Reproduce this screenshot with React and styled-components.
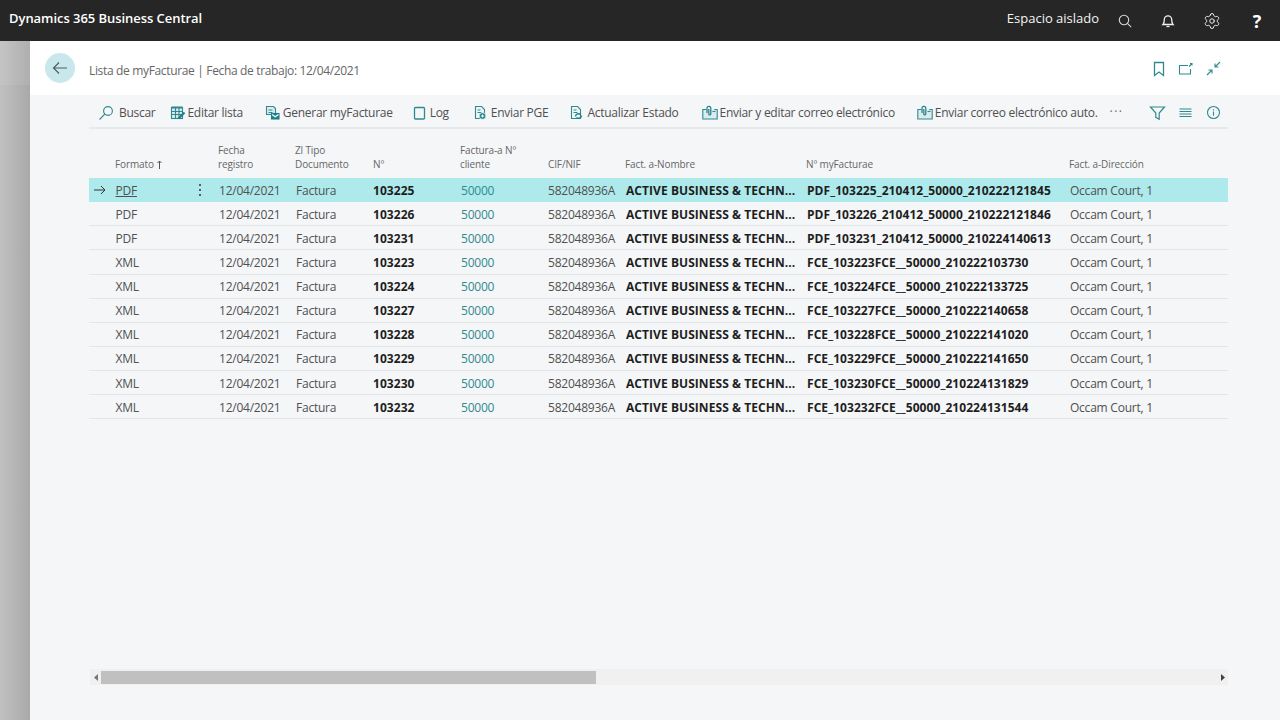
import React from "react";
import styled, { createGlobalStyle } from "styled-components";
import { Settings } from "lucide-react";

const Global = createGlobalStyle`
  html, body { margin: 0; padding: 0; height: 100%; overflow: hidden; background: #f5f6f8; }
  * { box-sizing: border-box; }
  #root { height: 720px; }
`;
const TEAL = "#2f8a90";
const FONT = `"Open Sans", "Noto Sans", "Liberation Sans", sans-serif`;

const Shell = styled.div`
  width: 1280px; height: 720px; display: flex; flex-direction: column;
  font-family: ${FONT}; color: #333; overflow: hidden;
`;
const TopBar = styled.header`
  height: 41px; flex: none; background: #262626; color: #fff;
  display: flex; align-items: center; padding: 0 15px 6px 9px;
`;
const Brand = styled.div`
  font-size: 13px; font-weight: 600; letter-spacing: -0.05px; white-space: nowrap; flex: 1;
`;
const Sandbox = styled.div`
  font-size: 13px; letter-spacing: -0.01px; margin-right: 19px; white-space: nowrap; color: #f4f4f4;
`;
const TopIcon = styled.span`
  display: flex; width: ${p => p.$w}px; justify-content: center; padding-top: 7px;
  margin-left: ${p => p.$ml ?? 0}px;
`;
const Help = styled(TopIcon)`
  font-size: 18px; font-weight: 700; color: #fff; line-height: 18px;
`;
const Body = styled.div`flex: 1; display: flex; min-height: 0;`;
const Side = styled.aside`
  width: 30px; flex: none;
  background:
    linear-gradient(180deg, rgba(255,255,255,.07) 0, rgba(255,255,255,.07) 44px, transparent 44px),
    linear-gradient(90deg, #c0c0c0 0%, #a9a9a9 100%);
`;
const Page = styled.main`flex: 1; display: flex; flex-direction: column; min-width: 0;`;
const Title = styled.section`
  height: 54px; flex: none; background: #fff; display: flex; align-items: center;
  padding: 0 59px 0 15px;
`;
const Back = styled.button`
  width: 30px; height: 30px; border-radius: 50%; border: 0; padding: 0; background: #c9e8ec;
  display: flex; align-items: center; justify-content: center; margin-top: -1px;
`;
const Crumb = styled.div`
  margin-left: 14px; flex: 1; font-size: 12px; color: #666; letter-spacing: -0.34px; white-space: nowrap; padding-top: 4px;
`;
const TitleIcons = styled.div`display: flex; gap: 13px; align-items: center; margin-top: 1px;`;
const Content = styled.section`
  flex: 1; display: flex; flex-direction: column; padding: 0 52px 0 59px; min-height: 0;
`;
const Toolbar = styled.nav`
  height: 34px; flex: none; display: flex; align-items: center;
  border-bottom: 2px solid #e8e9eb; padding: 4px 0 1px;
`;
const Action = styled.div`
  display: flex; align-items: center; gap: ${p => p.$gap}px; margin-left: ${p => p.$at}px;
  font-size: 12px; color: #505050; letter-spacing: -0.28px; white-space: nowrap;
  svg { flex: none; }
`;
const Dots = styled.span`
  margin-left: 12px; font-size: 12px; letter-spacing: 1.5px; color: #666; line-height: 1; margin-top: -2px;
`;
const ToolRight = styled.div`margin-left: 25px; display: flex; gap: 12.5px; align-items: center;`;

const COLS = "26px 103px 77px 78px 87px 88px 77px 181px 263px 1fr";
const Head = styled.div`
  height: 49px; flex: none; display: grid; grid-template-columns: ${COLS}; align-items: end; padding-bottom: 7px;
`;
const HeadCell = styled.div`
  font-size: 10px; line-height: 14px; color: #666; letter-spacing: -0.12px; white-space: pre-line;
  display: flex; align-items: center; gap: 3px;
`;
const Row = styled.div`
  height: 24.13px; display: grid; grid-template-columns: ${COLS}; align-items: center;
  background: ${p => (p.$active ? "#aeeaec" : "transparent")};
  border-bottom: ${p => (p.$active ? "0" : "1px solid #e4e5e7")};
  padding-top: ${p => (p.$active ? 0 : 1)}px;
  position: relative;
`;
const Cell = styled.div`
  font-size: 12px; white-space: nowrap; overflow: hidden;
  padding-left: ${p => p.$pad ?? 1}px;
  color: ${p => p.$link ? TEAL : p.$strong ? "#1e1e1e" : "#505050"};
  font-weight: ${p => (p.$strong ? 700 : 400)};
  text-decoration: ${p => (p.$under ? "underline" : "none")};
  letter-spacing: ${p => (p.$strong ? "0.06px" : "-0.23px")};
`;
const Marker = styled.div`display: flex; padding-left: 4px;`;
const Kebab = styled.span`
  position: absolute; left: 110px; top: 5px; width: 2px; height: 14px;
  display: flex; flex-direction: column; justify-content: space-between; padding: 1px 0;
  i { display: block; width: 2px; height: 2px; background: #333; border-radius: 50%; }
`;
const Spacer = styled.div`flex: 1;`;
const Scroll = styled.div`
  height: 16px; flex: none; margin: 0 0 35px 1px; background: #f0f0f0; display: flex; align-items: center;
`;
const ScrollEnd = styled.span`width: 11px; flex: none; display: flex; justify-content: center;`;
const Thumb = styled.div`width: 495px; height: 13px; background: #c0c0c0; flex: none;`;

const S = ({ w = 16, h = 16, vb, children, c = TEAL, sw = 1.1 }) => (
  <svg width={w} height={h} viewBox={vb || `0 0 ${w} ${h}`} fill="none" stroke={c} strokeWidth={sw}>{children}</svg>
);
const Doc = () => <path d="M3.500 1.500h6l3 3v9h-9z" fill="#eef6f7" />;
const Blob = ({ x = 10.5, y = 11, f = "#1f7f88" }) => <circle cx={x} cy={y} r="3.3" fill={f} stroke="#f5f6f8" strokeWidth=".7" />;

const Icons = {
  search: <S><circle cx="10" cy="6" r="4.4" /><path d="M6.800 9.200 1.500 14.500" /></S>,
  edit: <S><rect x="1.500" y="2.500" width="11" height="11" fill="#dcecee" /><path d="M1.500 2.500h11" strokeWidth="2" /><path d="M1.500 6.500h11M1.500 9.500h11M5.500 2.500v11M9 2.500v11" /><path d="M8.500 13.500l6-6" stroke="#1f7f88" strokeWidth="2.2" /></S>,
  gen: <S><path d="M2.500 1.500h7l2 2v6h-9z" fill="#dcecee" /><path d="M4.500 5h4M4.500 7.500h4" /><rect x="7.500" y="8.500" width="7.500" height="5.500" fill="#1f7f88" stroke="#1f7f88" /><path d="m8 9.500 3.200 2.300 3.300-2.300" stroke="#fff" /></S>,
  log: <S w={13} h={16} sw={1.3}><rect x="1.500" y="2.500" width="10" height="11.500" rx="1" /></S>,
  pge: <S><Doc /><path d="M5.500 5h3M5.500 7.500h4" /><Blob /><path d="M8.800 11h3.400M10.500 9.400v3.200" stroke="#fff" /></S>,
  act: <S><Doc /><path d="M5.500 5h3M5.500 7.500h4" /><path d="M7.500 11.500a3 3 0 0 1 5-2M13.500 10.500a3 3 0 0 1-5 2" strokeWidth="1.4" stroke="#1f7f88" /></S>,
  mail: <S><path d="M4.500 4.500H.8V14h14.400V4.500h-3" fill="#dcecee" /><path d="M5 8V3.200a1.900 1.900 0 0 1 3.800 0V9a1 1 0 0 1-2 0V4" stroke="#1f7f88" strokeWidth="1.2" /><path d="M10.500 6.500h3" /></S>,
  filter: <S w={17} h={16}><path d="M1.500 2h14l-5.300 6v6.300l-3.400-2V8z" strokeWidth="1.2" /></S>,
  list: <S w={15} h={16}><path d="M1.500 4h12M1.500 6.500h12M1.500 9h12M1.500 11.500h12" strokeWidth="1.2" /></S>,
  info: <S w={15} h={16}><circle cx="7.500" cy="7.500" r="6" /><path d="M7.500 6.500v4.200M7.500 4.200v1.200" /></S>,
};
const tools = [
  ["search", "Buscar", 9, 5],
  ["edit", "Editar lista", 15, 1],
  ["gen", "Generar myFacturae", 21, 3],
  ["log", "Log", 20, 4],
  ["pge", "Enviar PGE", 23, 3],
  ["act", "Actualizar Estado", 20, 3],
  ["mail", "Enviar y editar correo electrónico", 23, 2],
  ["mail", "Enviar correo electrónico auto.", 22, 2],
];
const heads = [
  [null], ["Formato", true], ["Fecha\nregistro"], ["Zl Tipo\nDocumento"], ["Nº"], ["Factura-a Nº\ncliente"],
  ["CIF/NIF"], ["Fact. a-Nombre"], ["Nº myFacturae"], ["Fact. a-Dirección"],
];
const rows = [
  ["PDF", "103225", "PDF_103225_210412_50000_210222121845"],
  ["PDF", "103226", "PDF_103226_210412_50000_210222121846"],
  ["PDF", "103231", "PDF_103231_210412_50000_210224140613"],
  ["XML", "103223", "FCE_103223FCE__50000_210222103730"],
  ["XML", "103224", "FCE_103224FCE__50000_210222133725"],
  ["XML", "103227", "FCE_103227FCE__50000_210222140658"],
  ["XML", "103228", "FCE_103228FCE__50000_210222141020"],
  ["XML", "103229", "FCE_103229FCE__50000_210222141650"],
  ["XML", "103230", "FCE_103230FCE__50000_210224131829"],
  ["XML", "103232", "FCE_103232FCE__50000_210224131544"],
];

export default function App() {
  return (
    <Shell>
      <Global />
      <TopBar>
        <Brand>Dynamics 365 Business Central</Brand>
        <Sandbox>Espacio aislado</Sandbox>
        <TopIcon $w={14}><S w={14} h={14} c="#d8d8d8"><circle cx="6" cy="6" r="4.7" /><path d="m9.400 9.400 3.800 3.800" /></S></TopIcon>
        <TopIcon $w={34} $ml={19}><S w={14} h={16} c="#f2f2f2" sw={1.3}><path d="M2 11.500c1.300-1.200 1.300-2.500 1.300-5a3.700 3.700 0 0 1 7.400 0c0 2.500 0 3.800 1.300 5z" /><path d="M5.500 13.500h3" /></S></TopIcon>
        <TopIcon $w={18} $ml={18}><Settings size={18} strokeWidth={1.3} color="#eeeeee" /></TopIcon>
        <Help $w={16} $ml={28}>?</Help>
      </TopBar>
      <Body>
        <Side />
        <Page>
          <Title>
            <Back aria-label="Atrás"><S w={16} h={14} c="#4a5c60"><path d="M15 7H1.500M7 1.500 1.500 7 7 12.500" /></S></Back>
            <Crumb>Lista de myFacturae | Fecha de trabajo: 12/04/2021</Crumb>
            <TitleIcons>
              <S w={12} h={16} sw={1.3}><path d="M1.500 1.500h9v13L6 11l-4.500 3.500z" /></S>
              <S w={15} h={14} sw={1.1}><path d="M10 3.500H1.500v8.500h11V7" /><path d="M11 4.500l3-3M12 1.500h2v2" /></S>
              <S w={15} h={15} sw={1.1}><path d="M14 1 9 6M9 2.500V6h3.500M1 14l5-5M2.500 9H6v3.500" /></S>
            </TitleIcons>
          </Title>
          <Content>
            <Toolbar>
              {tools.map(([ic, label, at, gap], i) => (
                <Action key={i} $at={at} $gap={gap}>{Icons[ic]}<span>{label}</span></Action>
              ))}
              <Dots>···</Dots>
              <ToolRight>{Icons.filter}{Icons.list}{Icons.info}</ToolRight>
            </Toolbar>
            <Head>
              {heads.map(([t, sort], i) => (
                <HeadCell key={i}>
                  {t}
                  {sort && <S w={5} h={9} c="#555" sw={1}><path d="M2.500 9V1M.5 3l2-2 2 2" /></S>}
                </HeadCell>
              ))}
            </Head>
            {rows.map((r, i) => (
              <Row key={r[1]} $active={i === 0}>
                <Marker>{i === 0 && <S w={13} h={10} c="#333" sw={1}><path d="M12 5H1M8 1l4 4-4 4" /></S>}</Marker>
                <Cell $pad={0.5} $under={i === 0}>{r[0]}</Cell>
                <Cell>12/04/2021</Cell>
                <Cell>Factura</Cell>
                <Cell $pad={0} $strong>{r[1]}</Cell>
                <Cell $link>50000</Cell>
                <Cell $pad={0}>582048936A</Cell>
                <Cell $strong>ACTIVE BUSINESS &amp; TECHN...</Cell>
                <Cell $strong>{r[2]}</Cell>
                <Cell>Occam Court, 1</Cell>
                {i === 0 && <Kebab><i /><i /><i /></Kebab>}
              </Row>
            ))}
            <Spacer />
            <Scroll>
              <ScrollEnd><svg width="4" height="7"><path d="M4 0v7L0 3.500z" fill="#777" /></svg></ScrollEnd>
              <Thumb />
              <Spacer />
              <ScrollEnd><svg width="4" height="7"><path d="M0 0v7l4-3.500z" fill="#444" /></svg></ScrollEnd>
            </Scroll>
          </Content>
        </Page>
      </Body>
    </Shell>
  );
}
